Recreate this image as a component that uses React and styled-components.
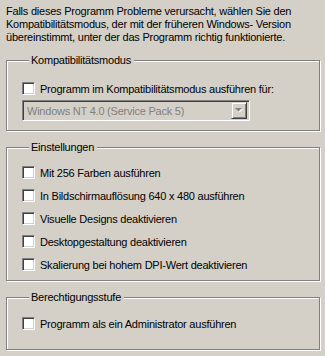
import React from 'react';
import styled, { createGlobalStyle } from 'styled-components';

const GlobalStyle = createGlobalStyle`
    html, body {
        margin: 0;
        padding: 0;
        background: #d4d0c8;
    }
    body {
        font-family: "Liberation Sans", Arial, sans-serif;
        font-size: 11px;
        letter-spacing: -0.23px;
        color: #000;
    }
`;

const Page = styled.div`
    width: 325px;
    height: 356px;
    background: #d4d0c8;
    display: flex;
    flex-direction: column;
    padding: 5px 0 0 6px;
    box-sizing: border-box;
    overflow: hidden;
`;

const Intro = styled.p`
    margin: 0 0 16px 0;
    line-height: 13px;
    white-space: nowrap;
`;

const Group = styled.div`
    width: 314px;
    height: ${(p) => p.$height}px;
    box-sizing: border-box;
    border: 1px solid #808080;
    box-shadow: inset 1px 1px 0 #fff, 1px 1px 0 #fff;
    margin-bottom: ${(p) => p.$gap || 0}px;
    display: flex;
    flex-direction: column;
    padding-left: 15px;
`;

const GroupTitle = styled.div`
    align-self: flex-start;
    margin: -7px 0 0 7px;
    padding: 0 3px 0 2px;
    line-height: 13px;
    background: #d4d0c8;
`;

const Rows = styled.div`
    display: flex;
    flex-direction: column;
    padding-top: ${(p) => p.$top}px;
`;

const Row = styled.label`
    display: flex;
    align-items: center;
    height: 23px;
    gap: 5px;
`;

const Box = styled.span`
    width: 13px;
    height: 13px;
    box-sizing: border-box;
    background: #fff;
    border: 1px solid;
    border-color: #808080 #fff #fff #808080;
    box-shadow: inset 1px 1px 0 #404040, inset -1px -1px 0 #d4d0c8;
    flex-shrink: 0;
`;

const Combo = styled.div`
    width: 228px;
    height: 21px;
    box-sizing: border-box;
    border: 1px solid;
    border-color: #808080 #fff #fff #808080;
    box-shadow: inset 1px 1px 0 #404040, inset -1px -1px 0 #d4d0c8;
    background: #d4d0c8;
    display: flex;
    align-items: center;
    padding: 2px 2px 2px 4px;
    color: #808080;
`;

const ComboText = styled.span`
    flex: 1;
`;

const ComboButton = styled.span`
    width: 16px;
    height: 17px;
    box-sizing: border-box;
    border: 1px solid;
    border-color: #d4d0c8 #404040 #404040 #d4d0c8;
    box-shadow: inset 1px 1px 0 #fff, inset -1px -1px 0 #808080;
    display: flex;
    align-items: center;
    justify-content: center;
`;

const Check = ({ children }) => (
    <Row>
        <Box />
        <span>{children}</span>
    </Row>
);

const App = () => {
    return (
        <Page>
            <GlobalStyle />
            <Intro>
                Falls dieses Programm Probleme verursacht, wählen Sie den<br />
                Kompatibilitätsmodus, der mit der früheren Windows- Version<br />
                übereinstimmt, unter der das Programm richtig funktionierte.
            </Intro>

            <Group $height={71} $gap={16}>
                <GroupTitle>Kompatibilitätsmodus</GroupTitle>
                <Rows $top={10}>
                    <Check>Programm im Kompatibilitätsmodus ausführen für:</Check>
                    <Combo>
                        <ComboText>Windows NT 4.0 (Service Pack 5)</ComboText>
                        <ComboButton>
                            <svg width="8" height="5" viewBox="0 0 8 5">
                                <path d="M1 1h7l-3.5 3.5z" fill="#fff" />
                                <path d="M0 0h7l-3.5 3.5z" fill="#808080" />
                            </svg>
                        </ComboButton>
                    </Combo>
                </Rows>
            </Group>

            <Group $height={134} $gap={16}>
                <GroupTitle>Einstellungen</GroupTitle>
                <Rows $top={7}>
                    <Check>Mit 256 Farben ausführen</Check>
                    <Check>In Bildschirmauflösung 640 x 480 ausführen</Check>
                    <Check>Visuelle Designs deaktivieren</Check>
                    <Check>Desktopgestaltung deaktivieren</Check>
                    <Check>Skalierung bei hohem DPI-Wert deaktivieren</Check>
                </Rows>
            </Group>

            <Group $height={53}>
                <GroupTitle>Berechtigungsstufe</GroupTitle>
                <Rows $top={8}>
                    <Check>Programm als ein Administrator ausführen</Check>
                </Rows>
            </Group>
        </Page>
    );
};

export default App;
